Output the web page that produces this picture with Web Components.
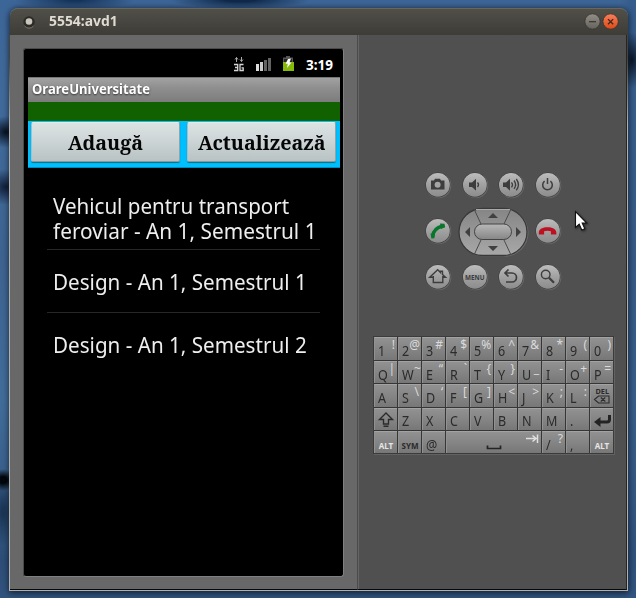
<!DOCTYPE html>
<html lang="ro">
<head>
<meta charset="utf-8">
<title>5554:avd1</title>
<style>
html,body{margin:0;width:636px;height:598px;overflow:hidden}
body{font-family:"Noto Sans","Open Sans",sans-serif}
</style>
</head>
<body>
<desk-top>
  <emulator-window>
    <title-bar slot="bar">5554:avd1</title-bar>
    <phone-screen slot="screen">
      <status-bar></status-bar>
      <app-title><fit-text w="118">OrareUniversitate</fit-text></app-title>
      <button-row>
        <app-button><fit-text w="75">Adaugă</fit-text></app-button>
        <app-button><fit-text w="128">Actualizează</fit-text></app-button>
      </button-row>
      <course-list>
        <course-item tall><fit-text w="236">Vehicul pentru transport</fit-text><fit-text w="264">feroviar - An 1, Semestrul 1</fit-text></course-item>
        <course-item><fit-text w="254">Design - An 1, Semestrul 1</fit-text></course-item>
        <course-item last><fit-text w="254">Design - An 1, Semestrul 2</fit-text></course-item>
      </course-list>
    </phone-screen>
    <control-pad slot="controls"></control-pad>
    <key-board slot="controls"></key-board>
  </emulator-window>
  <mouse-pointer slot="pointer"></mouse-pointer>
</desk-top>
<script>
const define = (name, html, setup) => customElements.define(name, class extends HTMLElement {
  constructor() {
    super();
    this.attachShadow({mode: 'open'}).innerHTML = html;
  }
  connectedCallback() { if (setup) setup(this, this.shadowRoot); }
});

define('desk-top', `<style>
:host{display:block;box-sizing:border-box;position:relative;width:636px;height:598px;padding:8px 8px 7px 10px;
 background:
 radial-gradient(ellipse 14px 28px at 632px 60px,#030c18dd 0%,transparent 100%),
 radial-gradient(ellipse 20px 16px at 6px 132px,#06101f 0%,transparent 100%),
 radial-gradient(ellipse 22px 18px at 6px 187px,#101d38 0%,transparent 100%),
 radial-gradient(ellipse 14px 11px at 3px 480px,#02060d 30%,transparent 100%),
 radial-gradient(ellipse 14px 34px at 3px 512px,#1b3656 10%,transparent 100%),
 radial-gradient(ellipse 70px 9px at 240px 0,#10294a 20%,transparent 100%),
 radial-gradient(ellipse 60px 10px at 75px 0,#16345a 10%,transparent 100%),
 linear-gradient(90deg,transparent 620px,#31568499 630px),
 linear-gradient(#3d6698 0,#416a9c 100px,#3f6795 200px,#3e6390 260px,#416c9a 400px,#375c86 500px,#2c4d76 560px,#31547e 598px)}
</style><slot></slot><slot name="pointer"></slot>`);

define('emulator-window', `<style>
:host{display:flex;flex-direction:column;box-sizing:border-box;width:618px;height:583px;border-radius:8px 8px 0 0;box-shadow:0 1px 6px 1px #0009}
.body{flex:1;display:grid;grid-template-columns:347px 1fr;border:1px solid #b0b0ae;border-image:linear-gradient(#45443f,#45443f 25px,#b0b0ae 90px) 1;border-width:0 1px 1px 1px;margin-left:-1px}
.left{background:#686868;border-bottom:1px solid #080808;padding:13px 0 0 13px;box-sizing:border-box}
.right{background:#505050;border-left:1px solid #4b4b4b;box-shadow:inset 1px 0 #656565;border-right:1px solid #252522;border-bottom:1px solid #080808;box-sizing:border-box;padding:137px 0 0 15px}
</style><slot name="bar"></slot><div class="body"><div class="left"><slot name="screen"></slot></div><div class="right"><slot name="controls"></slot></div></div>`);

define('title-bar', `<style>
:host{display:flex;align-items:center;box-sizing:border-box;height:27px;padding:0 8px 0 12px;border-radius:8px 8px 0 0;background:linear-gradient(#504f48,#3d3c37);border-top:1px solid #68665e;color:#dfdbd2;font:bold 13.5px/24px "Noto Sans",sans-serif}
svg{display:block;flex:none}
.t{margin-left:13px;flex:1;height:26px}
</style>
<svg width="14" height="14"><circle cx="7" cy="7" r="5.7" fill="#2c2b28"/><path d="M2.500 11a5.700 5.700 0 0 0 9 0" fill="none" stroke="#77766f"/><circle cx="7" cy="6.500" r="3.300" fill="#c9c6bd"/></svg>
<div class="t"><fit-text w="69"><slot></slot></fit-text></div>
<svg width="36" height="18"><defs><linearGradient id="g" x2="0" y2="1"><stop stop-color="#918f87"/><stop offset="1" stop-color="#64625b"/></linearGradient><linearGradient id="o" x2="0" y2="1"><stop stop-color="#f7805b"/><stop offset="1" stop-color="#dc4a17"/></linearGradient></defs>
<circle cx="8.500" cy="8.500" r="7.700" fill="url(#g)" stroke="#34332f" stroke-width=".8"/><path d="M5 8.700h7" stroke="#34332f" stroke-width="1.200"/>
<circle cx="26.600" cy="8.500" r="7.700" fill="url(#o)" stroke="#34332f" stroke-width=".8"/><path d="M24 6.100l5.200 5.200m0-5.200l-5.200 5.200" stroke="#40251b" stroke-width="1.300"/></svg>`);

define('phone-screen', `<style>
:host{display:block;box-sizing:border-box;width:321px;height:529px;padding:1px 3px 0 4px;background:#000;border:1px solid #4a4a4a;border-bottom-color:#808080;border-right-color:#808080;border-radius:3px}
</style><slot></slot>`);

define('status-bar', `<style>
:host{display:flex;height:27px;align-items:center;justify-content:flex-end;color:#fff;font:bold 13.5px/30px "Noto Sans",sans-serif}
svg{display:block;margin:2px 12px 0 0}div{margin-right:7px;height:28px}
</style>
<svg width="60" height="17">
<g stroke="#aaa" fill="none" stroke-width="1"><path d="M2.500 6V1.500M1 3.500l1.500-2 1.500 2M7.500 1v4.500M6 3.500l1.500 2 1.500-2"/></g>
<g fill="none" stroke="#d5d5d5" stroke-width="1.300"><path d="M0 8.500h3.700v6H0M1 11.500h3M9.500 8.500H6v6h3.200v-2.700H7.500"/></g>
<g><path d="M22 8h3v7h-3z" fill="#ddd"/><path d="M26 6h3v9h-3z" fill="#ccc"/><path d="M30 4h3v11h-3zM34 2h3v13h-3z" fill="#626262"/></g>
<path d="M52 0h4v1.500h3V15H49V1.500h3z" fill="#555"/><path d="M50 3h8v4h-8z" fill="#242424"/><path d="M49 6h11v9H49z" fill="#85b90a"/><path d="M54 3l3-.5-1.500 4h2L53 12l.8-4.200h-2.200z" fill="#fff"/>
</svg><div><fit-text w="27">3:19</fit-text></div>`);

define('app-title', `<style>
:host{display:block;box-sizing:border-box;height:25px;padding-left:4px;background:linear-gradient(#a2a2a2,#8f8f8f 40%,#7c7c7c);border-top:1px solid #777;color:#fff;font:bold 13.300px/23px "Noto Sans",sans-serif;text-shadow:0 1px 2px #333}
</style><slot></slot>`);

define('button-row', `<style>
:host{display:grid;grid-template-columns:149px 149px;gap:7px;box-sizing:border-box;height:66px;padding:20px 4px 6px 3px;background:linear-gradient(#116100 19px,#00bfff 19px);box-shadow:inset 0 -1px #008dbd}
</style><slot></slot>`);

define('app-button', `<style>
:host{display:flex;justify-content:center;height:40px;box-sizing:border-box;background:linear-gradient(#dbe3e3,#cdd5d6 45%,#b9c3c4);border:1px solid #c6d1d3;border-color:#ddecef #8fa5aa #8a999c #a9bdc2;border-radius:2px;box-shadow:0 1px 1px #155b;color:#060606;font:bold 20.500px/38px "Droid Serif","Noto Serif","DejaVu Serif Condensed","DejaVu Serif",serif}
</style><slot></slot>`);

define('course-list', `<style>:host{display:block;padding:19px 20px 0 19px}</style><slot></slot>`);

define('course-item', `<style>
:host{display:flex;flex-direction:column;justify-content:center;box-sizing:border-box;height:63px;padding-left:6px;border-bottom:1px solid #272727;color:#eee;font:21.700px/25px "Noto Sans","Open Sans",sans-serif}
:host([tall]){justify-content:flex-end;padding-bottom:6px}
:host([last]){border:0}
</style><slot></slot>`);

const icons = {
  camera: '<path d="M6 8.500h3l1-1.700h5l1 1.700h3.500v9H6z" fill="#3d3d3d"/><circle cx="12.600" cy="12.800" r="3" fill="#a4a4a4"/>',
  down: '<path d="M7 10.500h3l4-3.800v12l-4-3.700H7z" fill="#3d3d3d"/><path d="M15.500 10.500q2 2.200 0 4.500" fill="none" stroke="#3d3d3d" stroke-width="1.300"/>',
  up: '<path d="M5 10.500h3l4-3.800v12l-4-3.700H5z" fill="#3d3d3d"/><path d="M13.500 10.300q2 2.500 0 5M16 8.500q3.200 4.200 0 8.300M18.300 7q4.200 5.700 0 11.300" fill="none" stroke="#3d3d3d" stroke-width="1.300"/>',
  power: '<path d="M9.600 9.100a4.800 4.800 0 1 0 5.800 0M12.500 6v6" fill="none" stroke="#3d3d3d" stroke-width="1.500"/>',
  call: '<path d="M7.600 18.500Q8.400 10.200 17.500 8" fill="none" stroke="#08762b" stroke-width="3.400"/><path d="M5.500 15.600l4.500.4-.6 4.200-3 .3zM15 5.500l4.500.2.7 3.500-4.300 1.800z" fill="#08762b"/>',
  end: '<path d="M3.800 14.500c0-7 17.500-7 17.500 0v2h-5.400v-3.200q-3.400-1-6.800 0v3.200H3.800z" fill="#bd1020"/>',
  home: '<path d="M8.300 13.300H4.700l8-7.500 2.800 2.700V7.200h2v3.300l3 2.800h-3.300M8.300 12v6.500h9.500V12" fill="none" stroke="#3d3d3d" stroke-width="1.400"/>',
  menu: '<text x="3" y="15.500" textLength="19.500" lengthAdjust="spacingAndGlyphs" font-family="Noto Sans, sans-serif" font-weight="bold" font-size="7.500" fill="#3d3d3d">MENU</text>',
  back: '<path d="M7.500 9h6.500a4.500 4.500 0 0 1 0 9H8M10.500 5.500L7 9l3.500 3.500" fill="none" stroke="#3d3d3d" stroke-width="1.700"/>',
  search: '<circle cx="10.700" cy="10.500" r="4.300" fill="none" stroke="#3d3d3d" stroke-width="1.400"/><path d="M14 13.800l5 5" stroke="#3d3d3d" stroke-width="2.300"/>'
};

define('round-button', `<style>:host{display:block;width:27px;height:27px}svg{display:block}</style>`, (el, root) => {
  root.innerHTML += `<svg width="27" height="27"><defs><linearGradient id="b" x2="0" y2="1"><stop stop-color="#bdbdbd"/><stop offset=".5" stop-color="#a1a1a1"/><stop offset="1" stop-color="#8c8c8c"/></linearGradient></defs>
  <circle cx="13.600" cy="13.600" r="12.700" fill="#686868"/><circle cx="12.900" cy="12.900" r="12.500" fill="#3c3c3c"/><circle cx="12.900" cy="12.900" r="11.900" fill="url(#b)"/>${icons[el.getAttribute('icon')]}</svg>`;
});

define('direction-pad', `<style>:host{display:block;grid-column:2/4;margin:-11px 0 0 -4px;height:50px}svg{display:block}</style>
<svg width="71" height="50"><defs><linearGradient id="d" x2="0" y2="1"><stop stop-color="#858585"/><stop offset="1" stop-color="#a8a8a8"/></linearGradient><linearGradient id="c" x2="0" y2="1"><stop stop-color="#b8b8b8"/><stop offset="1" stop-color="#868686"/></linearGradient></defs>
<rect x="1.500" y="2" width="69" height="47.500" rx="23.700" fill="#6b6b6b"/>
<rect x="1" y="1.500" width="68" height="47" rx="23.500" fill="url(#d)" stroke="#393939" stroke-width="1.300"/>
<path d="M18 2.500h34" stroke="#aaa"/>
<path d="M16 2l7 15M53 2l-7 15M16 48l7-15M53 48l-7-15" stroke="#4b4b4b"/>
<rect x="16.500" y="17" width="37" height="15.500" rx="7.700" fill="url(#c)" stroke="#444"/>
<path d="M35 6l5 5H30zM35 44l5-5H30zM7 25l5-5v10zM63 25l-5-5v10z" fill="#404040"/></svg>`);

define('control-pad', `<style>
:host{display:grid;grid-template-columns:repeat(4,27px);column-gap:9.500px;grid-template-rows:27px 27px 27px;row-gap:19.200px;padding:0 0 0 52px}
</style>` + ['camera','down','up','power','call'].map(i => `<round-button icon="${i}"></round-button>`).join('') + '<direction-pad></direction-pad>' +
['end','home','menu','back','search'].map(i => `<round-button icon="${i}"></round-button>`).join(''));

define('key-cap', `<style>
:host{display:flex;justify-content:space-between;box-sizing:border-box;padding:0 2px 0 2.500px;background:linear-gradient(#919191,#828282 60%,#777);border-top:1px solid #a3a3a3;border-left:1px solid #929292;color:#2b2b2b;font:13.500px/15px "Noto Sans",sans-serif}
:host([wide]){grid-column:span 4;padding:0}
:host([kind]){padding:0}
b,i{display:block;font-style:normal;font-weight:400;white-space:pre}
b{align-self:flex-end;margin-bottom:.5px;transform:scaleX(.93);transform-origin:0 50%}
i{color:#dadada;font-size:12px;line-height:13px}
b.s{flex:1;font-weight:700;font-size:8px;line-height:12px;text-align:center;margin-bottom:1.500px;transform:none}
b.w{color:#e6e6e6}
svg{display:block}
</style>`, (el, root) => {
  const main = el.getAttribute('main'), alt = el.getAttribute('alt') || '', k = el.getAttribute('kind');
  if (k === 'sym') root.innerHTML += `<b class="s ${main === 'ALT' ? 'w' : ''}">${main}</b>`;
  else if (k) root.innerHTML += {
    shift: '<svg width="22" height="22"><path d="M11 4l6.500 6.500h-4V15h-5v-4.500h-4zM8.500 17.300h5" fill="none" stroke="#2b2b2b" stroke-width="1.400"/></svg>',
    enter: '<svg width="22" height="22"><path d="M18.500 6v4.500q0 2.500-2.500 2.500H8" fill="none" stroke="#242424" stroke-width="3"/><path d="M3 13l6.500-5v10z" fill="#242424"/></svg>',
    del: '<svg width="22" height="22"><text x="4.500" y="8.500" textLength="13.500" lengthAdjust="spacingAndGlyphs" font-family="Noto Sans, sans-serif" font-weight="bold" font-size="6.800" fill="#2b2b2b">DEL</text><path d="M3.500 14.500l4-3.500h10.500v7H7.500zM9.800 12.500l4.500 4m0-4l-4.500 4" fill="none" stroke="#2b2b2b" stroke-width="1.100"/></svg>',
    space: '<svg width="95" height="22"><path d="M40.500 13.500v3h13v-3" fill="none" stroke="#242424" stroke-width="1.700"/><path d="M79 6.500h9M85.500 3.500l3.500 3-3.500 3M90.500 2.500v8.500" fill="none" stroke="#e0e0e0" stroke-width="1.500"/></svg>'
  }[k];
  else {
    root.innerHTML += '<b></b>' + (alt ? '<i></i>' : '');
    root.querySelector('b').textContent = main;
    if (alt) root.querySelector('i').textContent = alt;
  }
});

define('key-board', `<style>
:host{display:grid;box-sizing:border-box;width:241px;height:118px;margin-top:45px;grid-template-columns:repeat(10,minmax(0,1fr));grid-template-rows:repeat(5,minmax(0,1fr));gap:1px;background:#363636;border:1px solid #3b3b3b;box-shadow:1px 1px #626262}
</style>`, (el, root) => {
  const rows = [
    ['1!','2@','3#','4$','5%','6^','7&','8*','9(','0)'],
    ['Q|','W~','E“','R`','T{','Y}','U_','I-','O+','P='],
    ['A','S\\','D‘','F[','G]','H<','J>','K;','L:','%del'],
    ['%shift','Z','X','C','V','B','N','M','.','%enter'],
    ['%ALT','%SYM','@','%space','/?',',','%ALT']
  ];
  for (const label of rows.flat()) {
    const key = document.createElement('key-cap');
    if (label.length > 2) {
      const name = label.slice(1);
      const text = name === 'ALT' || name === 'SYM';
      key.setAttribute('kind', text ? 'sym' : name);
      key.setAttribute('main', name);
      if (name === 'space') key.setAttribute('wide', '');
    } else {
      key.setAttribute('main', label[0]);
      key.setAttribute('alt', label.slice(1));
    }
    root.append(key);
  }
});

define('mouse-pointer', `<style>:host{display:block;position:absolute;left:574px;top:210px;filter:drop-shadow(1px 1px 1px #0008)}svg{display:block}</style>
<svg width="14" height="22"><path d="M1.500 1.500v16l3.700-3.300 2.600 5.800 3-1.300-2.600-5.700h4.600z" fill="#fff" stroke="#111" stroke-width="1.100"/></svg>`);

// Scales its text horizontally to the width given in "w".
define('fit-text', `<style>:host{display:block;white-space:pre}span{display:inline-block;transform-origin:0 50%;vertical-align:top}</style><span><slot></slot></span>`, (el, root) => {
  const w = +el.getAttribute('w'), span = root.querySelector('span');
  el.style.width = w + 'px';
  span.style.transform = `scaleX(${w / span.offsetWidth})`;
});
</script>
</body>
</html>
